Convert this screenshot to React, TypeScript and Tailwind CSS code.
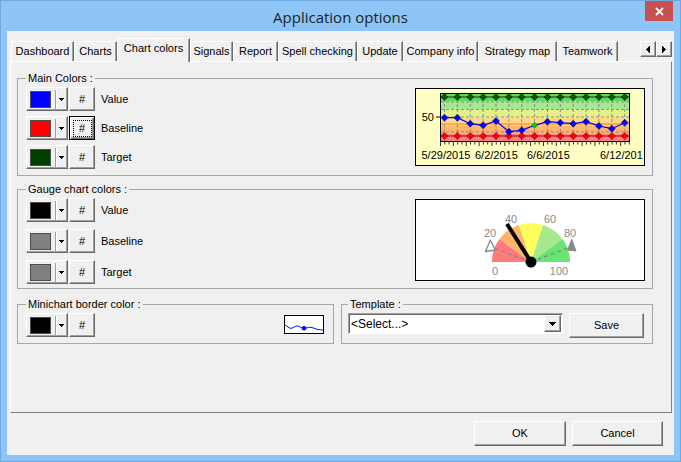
import React from "react";

const raised =
  "border border-t-white border-l-white border-r-[#696969] border-b-[#696969] shadow-[inset_-1px_-1px_0_#a0a0a0] bg-[#f0f0f0]";

function DropArrow() {
  return (
    <svg width="5" height="3" viewBox="0 0 5 3" className="block">
      <path d="M0 0h5v1h-1v1h-1v1h-1v-1h-1v-1h-1z" fill="#000" />
    </svg>
  );
}

function ColorButton({ swatch }: { swatch: string }) {
  return (
    <div className={`w-[42px] h-[24px] ${raised} flex items-center pl-[3px] shrink-0`}>
      <div className={`w-[21px] h-[17px] border border-[#4d4d4d] ${swatch}`} />
      <div className="ml-[4px] w-[2px] h-[19px] border-l border-l-[#a0a0a0] border-r border-r-white" />
      <div className="ml-[2px]">
        <DropArrow />
      </div>
    </div>
  );
}

function HashButton({ focused }: { focused?: boolean }) {
  if (focused) {
    return (
      <div className="ml-[1px] w-[26px] h-[24px] border border-black bg-[#f0f0f0] shadow-[inset_1px_1px_0_#fff,inset_-1px_-1px_0_#696969,inset_-2px_-2px_0_#a0a0a0] flex items-center justify-center shrink-0">
        <span className="w-[19px] h-[17px] border border-dotted border-black flex items-center justify-center">#</span>
      </div>
    );
  }
  return (
    <div className={`ml-[1px] w-[26px] h-[24px] ${raised} flex items-center justify-center shrink-0`}>#</div>
  );
}

function ColorRow({ swatch, label, focused }: { swatch: string; label?: string; focused?: boolean }) {
  return (
    <div className="flex items-center">
      <ColorButton swatch={swatch} />
      <HashButton focused={focused} />
      {label ? <span className="ml-[6px]">{label}</span> : null}
    </div>
  );
}

function diamond(x: number, y: number, r: number) {
  return `M${x} ${y - r}L${x + r} ${y}L${x} ${y + r}L${x - r} ${y}Z`;
}

function MainChart() {
  const xs = Array.from({ length: 15 }, (_, i) => 29.5 + i * 12.87);
  const blue = [29.7, 29.7, 35.7, 37.3, 33, 43.7, 42.3, 37.3, 33.7, 34.7, 35.7, 33.7, 38, 40.7, 34.7];
  const ticks = Array.from({ length: 45 }, (_, i) => 25.5 + i * 4.29);
  const bands = ["#62d862", "#a6e88f", "#e3f08c", "#ffd98a", "#ffb470", "#ff8080"];
  return (
    <svg width="230" height="78" viewBox="0 0 230 78" className="block">
      <rect x="0.5" y="0.5" width="229" height="77" fill="#ffffc4" stroke="#000" />
      {bands.map((c, i) => (
        <rect key={i} x="25.5" y={5.5 + i * 8} width="189" height="8" fill={c} />
      ))}
      {[14, 21.5, 29, 44].map((y) => (
        <line key={y} x1="26" x2="214" y1={y} y2={y} stroke="#7a7a7a" strokeDasharray="3 2" strokeWidth="0.8" />
      ))}
      {xs.map((x) => (
        <line key={x} x1={x} x2={x} y1="6" y2="53" stroke="#7a7a7a" strokeDasharray="3 2" strokeWidth="0.8" />
      ))}
      <line x1="25.5" x2="214.5" y1="36" y2="36" stroke="#ff7f00" strokeWidth="1" />
      <line x1="25.5" x2="214.5" y1="9" y2="9" stroke="#0b3b0b" strokeWidth="1" />
      <line x1="25.5" x2="214.5" y1="48" y2="48" stroke="#a00000" strokeWidth="1" />
      <polyline points={xs.map((x, i) => `${x},${blue[i]}`).join(" ")} fill="none" stroke="#0000ff" strokeWidth="1.2" />
      {xs.map((x) => (
        <path key={"g" + x} d={diamond(x, 9, 3.5)} fill="#0d5a0d" stroke="#000" strokeWidth="0.5" />
      ))}
      {xs.map((x) => (
        <path key={"r" + x} d={diamond(x, 48, 3.5)} fill="#ff0000" stroke="#600000" strokeWidth="0.5" />
      ))}
      {xs.map((x, i) =>
        i === 7 ? (
          <path key={"b" + x} d={diamond(x, blue[i], 3)} fill="#00d000" stroke="#006000" strokeWidth="0.5" />
        ) : (
          <path key={"b" + x} d={diamond(x, blue[i], 3.5)} fill="#0000ff" stroke="#000070" strokeWidth="0.5" />
        )
      )}
      <rect x="25.5" y="5.5" width="189" height="48" fill="none" stroke="#000" />
      {ticks.map((x, i) => (
        <line key={"t" + i} x1={x} x2={x} y1="54" y2={i % 3 === 0 ? 58 : 56.5} stroke="#000" strokeWidth="0.8" />
      ))}
      <line x1="21" x2="25" y1="29" y2="29" stroke="#000" />
      <text x="19" y="33" fontSize="11" textAnchor="end" fill="#000">50</text>
      <text x="6.5" y="71" fontSize="11" fill="#000">5/29/2015</text>
      <text x="60" y="71" fontSize="11" fill="#000">6/2/2015</text>
      <text x="112" y="71" fontSize="11" fill="#000">6/6/2015</text>
      <text x="185" y="71" fontSize="11" fill="#000">6/12/201</text>
    </svg>
  );
}

function Gauge() {
  const cx = 116;
  const cy = 63;
  const r = 39;
  const p = (a: number, rr: number) => [cx + rr * Math.cos((a * Math.PI) / 180), cy - rr * Math.sin((a * Math.PI) / 180)];
  const seg = (a0: number, a1: number) => {
    const [x0, y0] = p(a0, r);
    const [x1, y1] = p(a1, r);
    return `M${cx} ${cy}L${x0} ${y0}A${r} ${r} 0 0 1 ${x1} ${y1}Z`;
  };
  const colors = ["#ff7a7a", "#ffb46a", "#ffff5e", "#a9e98d", "#68e472"];
  return (
    <svg width="230" height="82" viewBox="0 0 230 82" className="block">
      <rect x="0.5" y="0.5" width="229" height="81" fill="#fff" stroke="#000" />
      {colors.map((c, i) => (
        <path key={i} d={seg(180 - i * 36, 180 - (i + 1) * 36)} fill={c} />
      ))}
      <line x1={cx} y1={cy} x2="76" y2="48" stroke="#888" strokeWidth="1.3" strokeDasharray="4 3" />
      <line x1={cx} y1={cy} x2="155" y2="48" stroke="#888" strokeWidth="1.3" strokeDasharray="4 3" />
      <path d="M75.3 41L70.5 52.5L80.3 51Z" fill="#fff" stroke="#888" strokeWidth="1.3" strokeLinejoin="round" />
      <path d="M156.7 40.3L152.7 51L161 52Z" fill="#888" stroke="#888" strokeWidth="1" strokeLinejoin="round" />
      <line x1={cx} y1={cy} x2="92" y2="25" stroke="#000" strokeWidth="4" />
      <circle cx={cx} cy={cy} r="5.5" fill="#000" />
      <g fill="#8a8a8a" fontSize="11" textAnchor="middle">
        <text x="80" y="76">0</text>
        <text x="75" y="38">20</text>
        <text x="96" y="24">40</text>
        <text x="135" y="24">60</text>
        <text x="155" y="38">80</text>
        <text x="144" y="76">100</text>
      </g>
    </svg>
  );
}

function MiniPreview() {
  return (
    <svg width="40" height="19" viewBox="0 0 40 19" className="block">
      <rect x="0.5" y="0.5" width="39" height="18" fill="#fff" stroke="#000" />
      <path
        d="M1 10C3 11 5 13.5 7 13.3S11 11 13.3 11S17.5 13.5 20 13.3S24.5 12 27 12.3S31 14 33.3 14.3S37.5 15 39 15"
        fill="none"
        stroke="#0000ff"
        strokeWidth="1"
      />
      <circle cx="20" cy="13.3" r="2.2" fill="#0000ff" />
    </svg>
  );
}

function ScrollArrow({ dir }: { dir: "left" | "right" }) {
  return (
    <div className={`w-[16px] h-[16px] ${raised} flex items-center justify-center`}>
      <svg width="4" height="7" viewBox="0 0 4 7" className="block">
        {dir === "left" ? (
          <path d="M4 0v7h-1v-1h-1v-1h-1v-1h-1v-1h1v-1h1v-1h1v-1z" fill="#000" />
        ) : (
          <path d="M0 0v7h1v-1h1v-1h1v-1h1v-1h-1v-1h-1v-1h-1v-1z" fill="#000" />
        )}
      </svg>
    </div>
  );
}

const tabs: { label: string; w: string; selected?: boolean }[] = [
  { label: "Dashboard", w: "w-[63px]" },
  { label: "Charts", w: "w-[43px]" },
  { label: "Chart colors", w: "w-[73px]", selected: true },
  { label: "Signals", w: "w-[43px]" },
  { label: "Report", w: "w-[45px]" },
  { label: "Spell checking", w: "w-[79px]" },
  { label: "Update", w: "w-[46px]" },
  { label: "Company info", w: "w-[75px]" },
  { label: "Strategy map", w: "w-[79px]" },
  { label: "Teamwork", w: "w-[61px]" },
];

export default function App() {
  return (
    <div className="w-[681px] h-[462px] bg-[#8cc5f6] border border-[#6fa9df] flex flex-col font-['Liberation_Sans',Arial,sans-serif] text-[11px] leading-[13px] text-black overflow-hidden">
      {/* Title bar */}
      <div className="h-[30px] grid grid-cols-[1fr_auto_1fr] items-center shrink-0">
        <div />
        <div className="font-['Open_Sans','Noto_Sans',sans-serif] text-[15px] leading-[20px] text-[#1f1f1f] pt-[1px]">
          Application options
        </div>
        <div className="justify-self-end self-start pr-[7px]">
          <div className="w-[28px] h-[20px] bg-[#c75050] flex items-center justify-center">
            <svg width="9" height="9" viewBox="0 0 9 9" className="block">
              <path d="M1 1L8 8M8 1L1 8" stroke="#fff" strokeWidth="1.8" />
            </svg>
          </div>
        </div>
      </div>

      {/* Client */}
      <div className="mx-[6px] h-[424px] bg-[#f0f0f0] flex flex-col shrink-0">
        {/* Tabs */}
        <div className="flex items-end h-[24px] mt-[7px] pl-[4px] pr-[2px] shrink-0">
          {tabs.map((t) =>
            t.selected ? (
              <div
                key={t.label}
                className={`${t.w} h-[24px] relative z-10 bg-[#f0f0f0] border-t border-l border-r border-t-white border-l-white border-r-[#696969] shadow-[inset_-1px_0_0_#a0a0a0] flex items-center justify-center pb-[4px] shrink-0`}
              >
                {t.label}
              </div>
            ) : (
              <div
                key={t.label}
                className={`${t.w} h-[21px] bg-[#f0f0f0] border-t border-l border-r border-t-white border-l-white border-r-[#696969] shadow-[inset_-1px_0_0_#a0a0a0] flex items-center justify-center pb-[1px] shrink-0`}
              >
                {t.label}
              </div>
            )
          )}
          <div className="ml-auto self-start mt-[3px] flex">
            <ScrollArrow dir="left" />
            <ScrollArrow dir="right" />
          </div>
        </div>

        {/* Panel */}
        <div className="-mt-[1px] ml-[3px] w-[662px] h-[352px] bg-[#f0f0f0] border border-t-white border-l-white border-r-[#808080] border-b-[#808080] pt-[10px] pl-[6px] flex flex-col shrink-0">
          <fieldset className="w-[636px] border border-[#a8a8a8] pl-[8px] pr-[7px] pt-[2px] pb-[6px]">
            <legend className="px-[2px] leading-[13px]">Main Colors :</legend>
            <div className="flex justify-between items-start">
              <div className="flex flex-col gap-[5px]">
                <ColorRow swatch="bg-[#0000ff]" label="Value" />
                <ColorRow swatch="bg-[#ff0000]" label="Baseline" focused />
                <ColorRow swatch="bg-[#003f00]" label="Target" />
              </div>
              <div className="mt-[1px]">
                <MainChart />
              </div>
            </div>
          </fieldset>

          <fieldset className="mt-[7px] w-[636px] border border-[#a8a8a8] pl-[8px] pr-[7px] pt-[2px] pb-[4px]">
            <legend className="px-[2px] leading-[13px]">Gauge chart colors :</legend>
            <div className="flex justify-between items-start">
              <div className="flex flex-col gap-[7px]">
                <ColorRow swatch="bg-[#000000]" label="Value" />
                <ColorRow swatch="bg-[#808080]" label="Baseline" />
                <ColorRow swatch="bg-[#808080]" label="Target" />
              </div>
              <div className="mt-[1px]">
                <Gauge />
              </div>
            </div>
          </fieldset>

          <div className="mt-[9px] w-[636px] flex gap-[7px]">
            <fieldset className="w-[317px] border border-[#a8a8a8] pl-[8px] pr-[9px] pt-[2px] pb-[5px]">
              <legend className="px-[2px] leading-[13px]">Minichart border color :</legend>
              <div className="flex justify-between items-start">
                <ColorRow swatch="bg-[#000000]" />
                <div className="mt-[2px]">
                  <MiniPreview />
                </div>
              </div>
            </fieldset>
            <fieldset className="flex-1 border border-[#a8a8a8] pl-[6px] pr-[7px] pt-[2px] pb-[5px]">
              <legend className="px-[2px] leading-[13px]">Template :</legend>
              <div className="flex items-start gap-[6px]">
                <div className="w-[215px] h-[21px] bg-white border border-t-[#a0a0a0] border-l-[#a0a0a0] border-b-white border-r-white shadow-[inset_1px_1px_0_#696969] flex items-center">
                  <span className="flex-1 pl-[2px] text-[12px] leading-[14px]">&lt;Select...&gt;</span>
                  <div className={`w-[17px] h-[17px] mr-[1px] ${raised} flex items-center justify-center`}>
                    <svg width="7" height="4" viewBox="0 0 7 4" className="block">
                      <path d="M0 0h7v1h-1v1h-1v1h-1v1h-1v-1h-1v-1h-1v-1h-1z" fill="#000" />
                    </svg>
                  </div>
                </div>
                <div className={`w-[75px] h-[25px] ${raised} flex items-center justify-center`}>Save</div>
              </div>
            </fieldset>
          </div>
        </div>

        {/* Bottom buttons */}
        <div className="flex justify-end gap-[6px] mt-[8px] pr-[11px] shrink-0">
          <div className={`w-[92px] h-[25px] ${raised} flex items-center justify-center`}>OK</div>
          <div className={`w-[91px] h-[25px] ${raised} flex items-center justify-center`}>Cancel</div>
        </div>
      </div>
    </div>
  );
}
